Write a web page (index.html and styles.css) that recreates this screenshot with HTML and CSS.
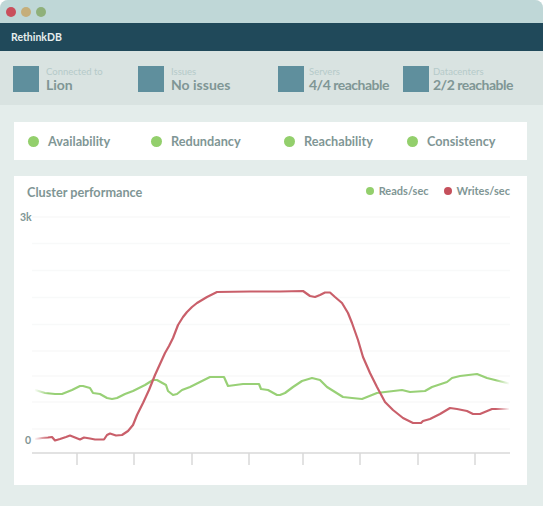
FILE: index.html
```html
<!DOCTYPE html>
<html lang="en">
  <head>
    <meta charset="UTF-8" />
    <title>RethinkDB</title>
    <link rel="stylesheet" href="styles.css">
  </head>
  <body>
    <div class="window">
      <div class="titlebar">
        <span class="light red"></span>
        <span class="light yellow"></span>
        <span class="light green"></span>
      </div>
      <div class="navbar">RethinkDB</div>
      <div class="stats">
        <div class="stat">
          <div class="stat-icon"></div>
          <div>
            <div class="stat-label">Connected to</div>
            <div class="stat-value">Lion</div>
          </div>
        </div>
        <div class="stat">
          <div class="stat-icon"></div>
          <div>
            <div class="stat-label">Issues</div>
            <div class="stat-value">No issues</div>
          </div>
        </div>
        <div class="stat stat-narrow">
          <div class="stat-icon"></div>
          <div>
            <div class="stat-label">Servers</div>
            <div class="stat-value">4/4 reachable</div>
          </div>
        </div>
        <div class="stat stat-narrow last">
          <div class="stat-icon"></div>
          <div>
            <div class="stat-label">Datacenters</div>
            <div class="stat-value">2/2 reachable</div>
          </div>
        </div>
      </div>
      <div class="content">
        <div class="card status">
          <div class="status-item"><span class="dot"></span>Availability</div>
          <div class="status-item"><span class="dot"></span>Redundancy</div>
          <div class="status-item"><span class="dot"></span>Reachability</div>
          <div class="status-item"><span class="dot"></span>Consistency</div>
        </div>
        <div class="card chart">
          <div class="chart-head">
            <h2>Cluster performance</h2>
            <div class="legend">
              <div class="legend-item"><span class="legend-dot reads"></span>Reads/sec</div>
              <div class="legend-item"><span class="legend-dot writes"></span>Writes/sec</div>
            </div>
          </div>
          <!-- viewBox uses page coordinates so the points read like the screenshot -->
          <svg class="plot" width="513" height="287" viewBox="14 198 513 287">
            <defs>
              <linearGradient id="fadeGreen" gradientUnits="userSpaceOnUse" x1="34" y1="0" x2="510" y2="0">
                <stop offset="0" stop-color="#98d076" stop-opacity="0"/>
                <stop offset="0.03" stop-color="#98d076"/>
                <stop offset="0.97" stop-color="#98d076"/>
                <stop offset="1" stop-color="#98d076" stop-opacity="0"/>
              </linearGradient>
              <linearGradient id="fadeRed" gradientUnits="userSpaceOnUse" x1="34" y1="0" x2="510" y2="0">
                <stop offset="0" stop-color="#c95f6a" stop-opacity="0"/>
                <stop offset="0.03" stop-color="#c95f6a"/>
                <stop offset="0.97" stop-color="#c95f6a"/>
                <stop offset="1" stop-color="#c95f6a" stop-opacity="0"/>
              </linearGradient>
            </defs>
            <g class="grid">
              <line x1="32" x2="510" y1="217" y2="217"/>
              <line x1="32" x2="510" y1="243.5" y2="243.5"/>
              <line x1="32" x2="510" y1="270.5" y2="270.5"/>
              <line x1="32" x2="510" y1="297.5" y2="297.5"/>
              <line x1="32" x2="510" y1="324.5" y2="324.5"/>
              <line x1="32" x2="510" y1="351" y2="351"/>
              <line x1="32" x2="510" y1="376" y2="376"/>
              <line x1="32" x2="510" y1="402" y2="402"/>
              <line x1="32" x2="510" y1="429" y2="429"/>
            </g>
            <g class="axis">
              <line x1="32" x2="510" y1="453" y2="453"/>
              <line x1="77" x2="77" y1="453" y2="465"/>
              <line x1="134" x2="134" y1="453" y2="465"/>
              <line x1="192" x2="192" y1="453" y2="465"/>
              <line x1="249" x2="249" y1="453" y2="465"/>
              <line x1="303" x2="303" y1="453" y2="465"/>
              <line x1="360" x2="360" y1="453" y2="465"/>
              <line x1="418" x2="418" y1="453" y2="465"/>
              <line x1="475" x2="475" y1="453" y2="465"/>
            </g>
            <text class="tick" x="20" y="220.5">3k</text>
            <text class="tick" x="25" y="444">0</text>
            <polyline class="series" stroke="url(#fadeGreen)" points="35,390 45,393 55,394 62,394 72,390 80,386 83,386 90,388 93,393 100,394 107,398 112,399 117,398 125,394 133,391 145,385 153,380 157,380 166,385 168,391 173,395 177,394 182,390 190,387 200,382 210,377 224,377 228,386 243,384 259,384 261,389 268,390 277,395 280,395 285,393 293,387 302,381 312,378 320,380 327,387 343,397 352,398 362,399 377,393 385,392 402,390 410,392 425,391 432,387 447,382 452,378 460,376 477,374 487,378 509,383.5"/>
            <polyline class="series" stroke="url(#fadeRed)" points="35,439 42,438 48,437.5 52,437 55,440.5 60,439 66,437 70,435.5 75,437.5 80,439.5 84,437.5 90,438.5 95,439.5 104,439.5 107,435 110,433.5 116,435.5 122,435 128,431 133,425 137,415 143,403 149,390 155,375 160,364 165,353 169,346 173,338 178,325 183,317 187,312 192,307 197,303 207,297 217,292 250,291.5 280,291.5 303,291 310,296 315,297 320,295 325,292.5 330,292.5 335,297 342,303 348,313 352,323 358,340 363,357 370,373 377,387 385,402 393,410 403,418 413,423 421,423 423,421 430,419 440,414 450,408 457,409 467,411 473,414 480,414 492,409 509,409"/>
          </svg>
        </div>
      </div>
    </div>
  </body>
</html>
```

FILE: styles.css
```css
body {
  margin: 0;
  background: #fff;
  font-family: "Lato", sans-serif;
}
.window {
  width: 543px;
  height: 506px;
  background: #e4edeb;
  border-radius: 8px 8px 0 0;
  overflow: hidden;
}
.titlebar {
  height: 23px;
  box-sizing: border-box;
  padding-left: 6px;
  display: flex;
  align-items: center;
  gap: 5px;
  background: #bfd7d7;
}
.light {
  width: 10px;
  height: 10px;
  border-radius: 50%;
}
.light.red {
  background: #c94f5c;
}
.light.yellow {
  background: #c5ae7a;
}
.light.green {
  background: #8fb07a;
}
.navbar {
  height: 28px;
  box-sizing: border-box;
  padding-left: 11px;
  line-height: 28px;
  font-size: 10.5px;
  font-weight: 700;
  color: #e6eeee;
  background: #20495a;
}
.stats {
  height: 54px;
  box-sizing: border-box;
  padding: 15px 0 0 13px;
  display: grid;
  grid-template-columns: 125px 140px 125px 1fr;
  background: #d9e3e1;
}
.stat {
  display: flex;
  gap: 7px;
}
.stat-narrow {
  gap: 5px;
}
.stat-narrow.last {
  gap: 4px;
}
.stat-narrow .stat-value {
  letter-spacing: -0.5px;
}
.stat-icon {
  width: 26px;
  height: 26px;
  background: #5f8f9d;
}
.stat-label {
  font-size: 9.5px;
  line-height: 11px;
  color: #b5cac9;
}
.stat-value {
  font-size: 14px;
  line-height: 15px;
  font-weight: 700;
  color: #7f9695;
}
.content {
  padding: 17px 16px 0 14px;
}
.card {
  background: #fff;
}
.status {
  height: 38px;
  box-sizing: border-box;
  padding-left: 14px;
  display: grid;
  grid-template-columns: 123px 133px 123px 1fr;
  align-items: center;
}
.status-item {
  display: flex;
  align-items: center;
  gap: 9px;
  font-size: 12.7px;
  font-weight: 700;
  color: #7f9695;
}
.dot {
  width: 11px;
  height: 11px;
  border-radius: 50%;
  background: #93cf6c;
}
.chart {
  margin-top: 16px;
  height: 309px;
}
.chart-head {
  height: 22px;
  box-sizing: border-box;
  padding: 8px 17px 0 13px;
  display: flex;
  justify-content: space-between;
}
.chart-head h2 {
  margin: 0;
  font-size: 12.7px;
  line-height: 16px;
  font-weight: 700;
  color: #7f9695;
}
.legend {
  display: flex;
  gap: 15px;
  font-size: 11px;
  line-height: 14px;
  font-weight: 700;
  color: #7f9695;
}
.legend-item {
  display: flex;
  align-items: center;
  gap: 5px;
}
.legend-dot {
  width: 8px;
  height: 8px;
  border-radius: 50%;
}
.legend-dot.reads {
  background: #93cf6c;
}
.legend-dot.writes {
  background: #c5505c;
}
.plot {
  display: block;
}
.grid line {
  stroke: #f8f9f9;
  stroke-width: 1.5;
}
.axis line {
  stroke: #d9d9d9;
  stroke-width: 1.5;
}
.tick {
  font-size: 10.5px;
  font-weight: 700;
  fill: #7f9695;
}
.series {
  fill: none;
  stroke-width: 2.2;
  stroke-linejoin: round;
}
```
